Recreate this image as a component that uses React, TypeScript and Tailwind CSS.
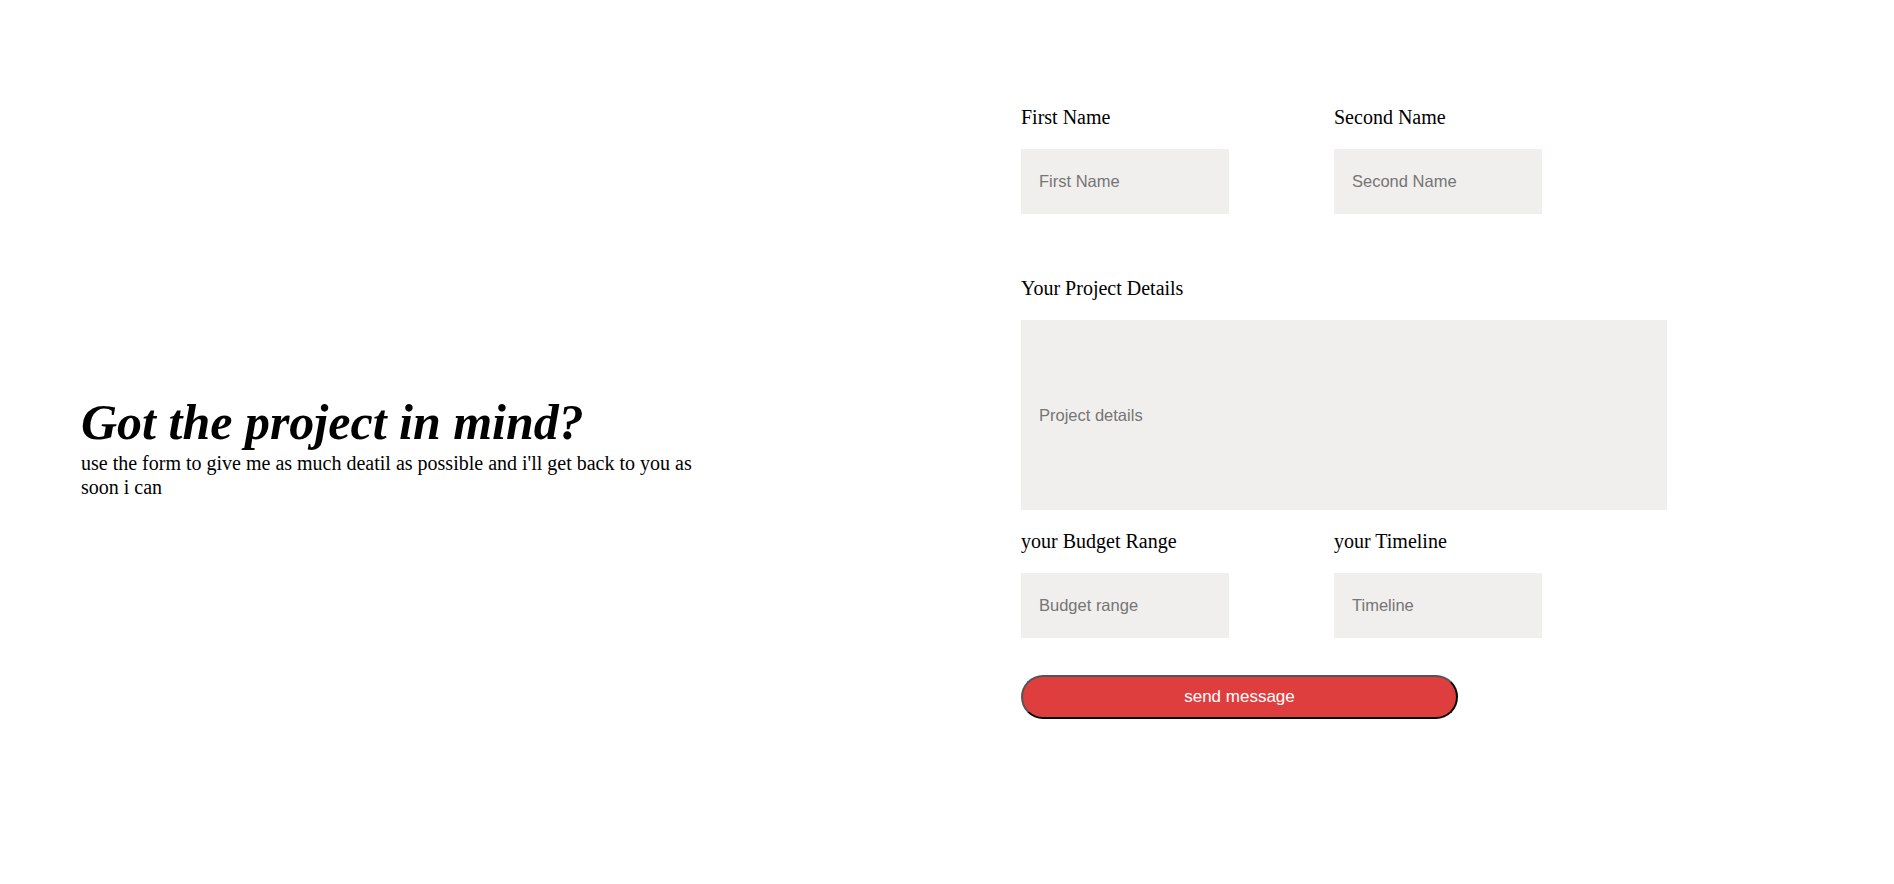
import React from "react";

const serif = { fontFamily: '"Liberation Serif", "Times New Roman", serif' };

function Field({ label, placeholder, className }: { label: string; placeholder: string; className?: string }) {
  return (
    <div className={"flex flex-col " + (className || "")}>
      <label className="text-[20px] leading-[23px] text-black mb-5 font-['Liberation_Serif',serif]">{label}</label>
      <input
        placeholder={placeholder}
        className="w-[208px] h-[65px] bg-[#f1efed] pl-[18px] text-[16.5px] font-['Liberation_Sans',Arial,sans-serif] placeholder:text-[#757575] outline-none"
      />
    </div>
  );
}

export default function App() {
  return (
    <div className="flex w-full h-[884px] bg-white" style={serif}>
      <div className="w-[1021px] shrink-0 pl-[81px] pt-[8px] flex flex-col justify-center">
        <h1 className="text-[50px] leading-[57px] font-bold italic text-black font-['Liberation_Serif',serif]">
          Got the project in mind?
        </h1>
        <p className="text-[20px] leading-[24px] text-black max-w-[630px] font-['Liberation_Serif',serif]">
          use the form to give me as much deatil as possible and i'll get back to you as soon i can
        </p>
      </div>
      <form className="flex flex-col pt-[106px]" onSubmit={(e) => e.preventDefault()}>
        <div className="flex gap-[105px]">
          <Field label="First Name" placeholder="First Name" />
          <Field label="Second Name" placeholder="Second Name" />
        </div>
        <div className="flex flex-col mt-[63px]">
          <label className="text-[20px] leading-[23px] text-black mb-5 font-['Liberation_Serif',serif]">Your Project Details</label>
          <input
            placeholder="Project details"
            className="w-[646px] h-[190px] bg-[#f1efed] pl-[18px] text-[16.5px] font-['Liberation_Sans',Arial,sans-serif] placeholder:text-[#757575] outline-none"
          />
        </div>
        <div className="flex gap-[105px] mt-5">
          <Field label="your Budget Range" placeholder="Budget range" />
          <Field label="your Timeline" placeholder="Timeline" />
        </div>
        <button
          type="submit"
          className="mt-[37px] w-[437px] h-[44px] rounded-full bg-[#df3e3e] text-white text-[17px] font-['Liberation_Sans',Arial,sans-serif] border-2 border-t-[#555] border-l-[#555] border-r-black border-b-black"
        >
          send message
        </button>
      </form>
    </div>
  );
}
